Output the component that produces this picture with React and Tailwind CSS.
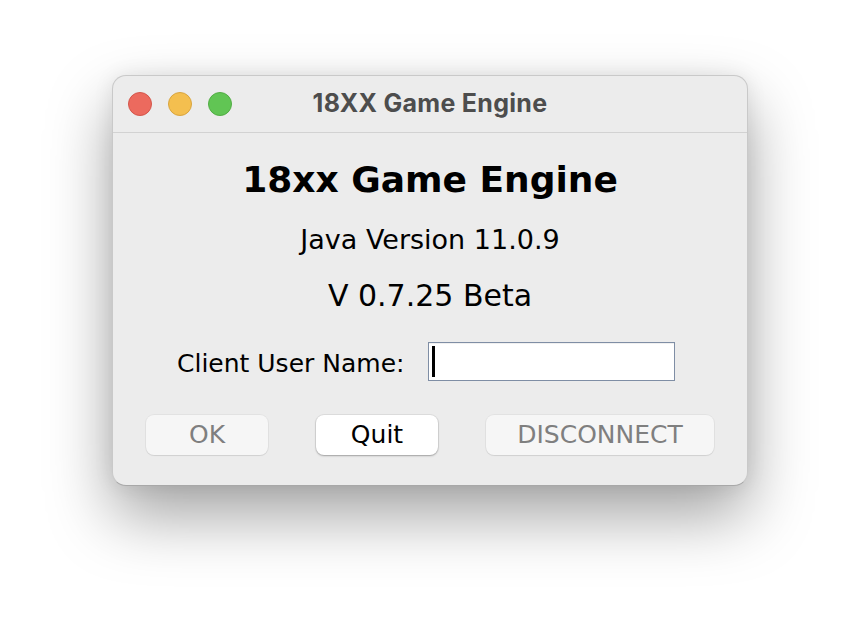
import React from 'react';

const dejavu = {fontFamily: '"DejaVu Sans", "Liberation Sans", sans-serif'};

function TrafficLights() {
    return (
        <div className="flex items-center gap-[16px]">
            <span className="w-[24px] h-[24px] rounded-full bg-[#ec6a5e] border border-[#d4564b]" />
            <span className="w-[24px] h-[24px] rounded-full bg-[#f4bf4f] border border-[#d9a53f]" />
            <span className="w-[24px] h-[24px] rounded-full bg-[#61c554] border border-[#52ad44]" />
        </div>
    );
}

function Btn({label, enabled, width}) {
    return (
        <button
            className={enabled
                ? 'h-[40px] rounded-[8px] bg-white text-black text-[25px] leading-[30px] shadow-[0_0_0_1px_rgba(0,0,0,0.06),0_1px_2px_rgba(0,0,0,0.28)]'
                : 'h-[40px] rounded-[8px] bg-[#f6f6f6] text-[#7f7f7f] text-[25px] leading-[30px] shadow-[0_0_0_1px_rgba(0,0,0,0.04),0_1px_1px_rgba(0,0,0,0.08)]'}
            style={{...dejavu, width}}>
            {label}
        </button>
    );
}

export default function App() {
    return (
        <div className="w-[860px] h-[634px] bg-white flex justify-center pt-[75px]">
            <div className="w-[636px] h-[411px] rounded-[14px] bg-[#ececec] border border-[#c9c9c9] border-b-[#a8a8a8] shadow-[0_30px_64px_rgba(0,0,0,0.36),0_0_20px_rgba(0,0,0,0.08)] flex flex-col overflow-hidden">
                {/* Title bar */}
                <div className="h-[57px] shrink-0 flex items-center pl-[15px] border-b border-[#d2d2d2] relative">
                    <TrafficLights />
                    <div className="absolute inset-0 flex items-center justify-center text-[25px] tracking-[0.3px] font-bold text-[#4d4d4d] font-['Inter',sans-serif]">
                        18XX Game Engine
                    </div>
                </div>

                {/* Body */}
                <div className="flex flex-col items-center" style={dejavu}>
                    <div className="mt-[27px] text-[36px] font-bold text-black leading-[40px]">18xx Game Engine</div>
                    <div className="mt-[24px] text-[27px] text-black leading-[32px]">Java Version 11.0.9</div>
                    <div className="mt-[22px] text-[30px] text-black leading-[36px]">V 0.7.25 Beta</div>

                    <div className="mt-[28px] w-full flex items-center pl-[64px]">
                        <div className="w-[251px] pt-[4px] text-[25px] leading-[30px] text-black">Client User Name:</div>
                        <div className="w-[247px] h-[39px] bg-white border border-[#7f8ea5] shadow-[inset_0_1px_0_rgba(0,0,0,0.06)] flex items-center pl-[3px]">
                            <span className="w-[3px] h-[31px] bg-black" />
                        </div>
                    </div>

                    <div className="mt-[34px] flex items-center gap-[48px]">
                        <Btn label="OK" enabled={false} width={122} />
                        <Btn label="Quit" enabled={true} width={122} />
                        <Btn label="DISCONNECT" enabled={false} width={228} />
                    </div>
                </div>
            </div>
        </div>
    );
}
